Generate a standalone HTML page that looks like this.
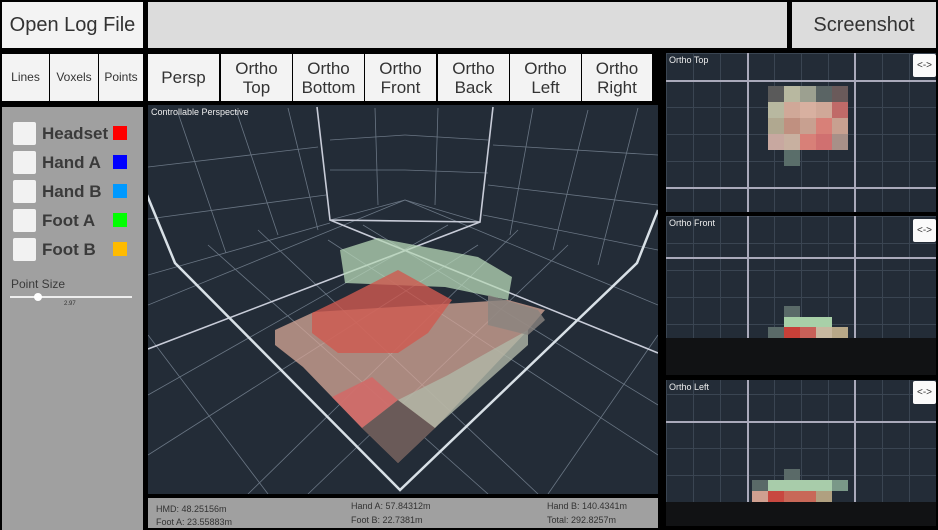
<!DOCTYPE html>
<html><head><meta charset="utf-8"><style>
*{margin:0;padding:0;box-sizing:border-box}
body{width:938px;height:530px;background:#000;position:relative;overflow:hidden;font-family:"Liberation Sans",sans-serif}
.a{position:absolute}
.btn{position:absolute;background:#f3f3f3;color:#333;display:flex;align-items:center;justify-content:center;text-align:center;line-height:19px;font-size:17px}
.cb{position:absolute;left:11px;width:23px;height:23px;background:#f2f2f2;border-radius:2px}
.lb{position:absolute;left:42px;font-size:17px;font-weight:bold;color:#3a3a3a}
.sw{position:absolute;left:111px;width:14px;height:14px}
.sm{position:absolute;font-size:9px;color:#333}
.vb{position:absolute;right:0;width:23px;height:23px;background:#fafafa;font-size:10px;color:#333;display:flex;align-items:center;justify-content:center;border-radius:2px}
.pt{position:absolute;left:3px;top:2px;font-size:9px;color:#eee}
</style></head><body>
<div class="btn" style="left:2px;top:2px;width:141px;height:46px;font-size:20px">Open Log File</div>
<div class="a" style="left:148px;top:2px;width:639px;height:46px;background:#dcdcdc"></div>
<div class="btn" style="left:792px;top:2px;width:144px;height:46px;background:#dcdcdc;font-size:20px">Screenshot</div>

<div class="btn" style="left:2px;top:54px;width:47px;height:47px;font-size:12px">Lines</div>
<div class="btn" style="left:50px;top:54px;width:48px;height:47px;font-size:12px">Voxels</div>
<div class="btn" style="left:99px;top:54px;width:44px;height:47px;font-size:12px">Points</div>

<div class="btn" style="left:148px;top:54px;width:71px;height:47px">Persp</div>
<div class="btn" style="left:221px;top:54px;width:71px;height:47px">Ortho<br>Top</div>
<div class="btn" style="left:293px;top:54px;width:71px;height:47px">Ortho<br>Bottom</div>
<div class="btn" style="left:365px;top:54px;width:71px;height:47px">Ortho<br>Front</div>
<div class="btn" style="left:438px;top:54px;width:71px;height:47px">Ortho<br>Back</div>
<div class="btn" style="left:510px;top:54px;width:71px;height:47px">Ortho<br>Left</div>
<div class="btn" style="left:582px;top:54px;width:70px;height:47px">Ortho<br>Right</div>

<div class="a" style="left:2px;top:107px;width:141px;height:423px;background:#a0a0a0">
<div class="cb" style="top:15px"></div><div class="lb" style="left:40px;top:17px">Headset</div><div class="sw" style="top:19px;background:#f00"></div>
<div class="cb" style="top:44px"></div><div class="lb" style="left:40px;top:46px">Hand A</div><div class="sw" style="top:48px;background:#00f"></div>
<div class="cb" style="top:73px"></div><div class="lb" style="left:40px;top:75px">Hand B</div><div class="sw" style="top:77px;background:#09f"></div>
<div class="cb" style="top:102px"></div><div class="lb" style="left:40px;top:104px">Foot A</div><div class="sw" style="top:106px;background:#0f0"></div>
<div class="cb" style="top:131px"></div><div class="lb" style="left:40px;top:133px">Foot B</div><div class="sw" style="top:135px;background:#fb0"></div>
<div class="a" style="left:9px;top:170px;font-size:12px;color:#3a3a3a">Point Size</div>
<div class="a" style="left:8px;top:189px;width:122px;height:2px;background:#eee"></div>
<div class="a" style="left:32px;top:186px;width:8px;height:8px;border-radius:50%;background:#fff"></div>
<div class="a" style="left:62px;top:194px;font-size:6px;color:#333">2.97</div>
</div>

<div class="a" style="left:148px;top:105px;width:510px;height:389px;background:#232c37;overflow:hidden">
<svg width="510" height="389" style="position:absolute;left:0;top:0">
<g stroke="#6a7684" stroke-width="0.8" fill="none">
<line x1="30" y1="8" x2="78" y2="148"/><line x1="88" y1="5" x2="130" y2="130"/><line x1="140" y1="3" x2="170" y2="125"/>
<line x1="0" y1="62" x2="170" y2="42"/><line x1="0" y1="114" x2="178" y2="90"/><line x1="0" y1="170" x2="182" y2="118"/>
<line x1="227" y1="3" x2="230" y2="100"/><line x1="290" y1="3" x2="287" y2="100"/>
<line x1="182" y1="35" x2="257" y2="30"/><line x1="257" y1="30" x2="340" y2="35"/><line x1="182" y1="65" x2="257" y2="65"/><line x1="257" y1="65" x2="340" y2="68"/>
<line x1="345" y1="40" x2="510" y2="50"/><line x1="340" y1="80" x2="510" y2="100"/><line x1="335" y1="110" x2="510" y2="145"/>
<line x1="385" y1="3" x2="362" y2="130"/><line x1="440" y1="5" x2="405" y2="145"/><line x1="490" y1="3" x2="450" y2="160"/>
<line x1="0" y1="200" x2="257" y2="95"/><line x1="0" y1="290" x2="300" y2="120"/><line x1="0" y1="350" x2="330" y2="140"/>
<line x1="510" y1="200" x2="257" y2="95"/><line x1="510" y1="300" x2="215" y2="120"/><line x1="510" y1="350" x2="180" y2="135"/>
<line x1="60" y1="140" x2="340" y2="389"/><line x1="110" y1="125" x2="390" y2="389"/><line x1="0" y1="230" x2="120" y2="389"/>
<line x1="420" y1="140" x2="160" y2="389"/><line x1="370" y1="125" x2="100" y2="389"/><line x1="510" y1="230" x2="400" y2="389"/>
<line x1="182" y1="115" x2="257" y2="95"/><line x1="257" y1="95" x2="332" y2="117"/>
</g>
<g stroke="#c8ccd8" stroke-width="1.6" fill="none">
<polyline points="169,2 182,115 332,117 345,2"/>
<polyline points="0,244 332,117"/><polyline points="510,248 182,115"/>
</g>
<polyline points="-1,90 27,158 252,385 489,158 510,105" stroke="#d8e0e6" stroke-width="2.5" fill="none"/>
<g>
<polygon points="127,225 166,207 360,195 397,205 380,225 290,320 250,358 214,323 184,292 155,262 127,240" fill="#d8a898" opacity="0.75"/>
<polygon points="192,145 230,133 330,152 364,172 360,195 297,182 197,178" fill="#b8d8b8" opacity="0.75"/>
<polygon points="164,208 197,192 250,165 304,195 280,228 250,248 190,248 164,228" fill="#d05a50" opacity="0.8"/>
<polygon points="184,292 224,272 250,295 214,323" fill="#d06a68" opacity="0.9"/>
<polygon points="214,323 250,295 287,323 250,358" fill="#6a5a58"/>
<polygon points="287,323 250,295 300,270 335,250 380,225 380,240 290,320" fill="#b0b8a8" opacity="0.8"/>
<polygon points="340,190 390,205 397,215 380,230 340,220" fill="#8a8480" opacity="0.8"/>
</g>
</svg>
<div class="pt" style="font-size:9px">Controllable Perspective</div>
</div>

<div class="a" style="left:148px;top:498px;width:510px;height:30px;background:#a0a0a0">
<div class="sm" style="left:8px;top:6px">HMD: 48.25156m</div><div class="sm" style="left:8px;top:19px">Foot A: 23.55883m</div>
<div class="sm" style="left:203px;top:3px">Hand A: 57.84312m</div><div class="sm" style="left:203px;top:17px">Foot B: 22.7381m</div>
<div class="sm" style="left:399px;top:3px">Hand B: 140.4341m</div><div class="sm" style="left:399px;top:17px">Total: 292.8257m</div>
</div>

<div class="a" style="left:666px;top:53px;width:270px;height:159px;background:#232c37;overflow:hidden;
background-image:linear-gradient(90deg,#3a4552 1px,transparent 1px),linear-gradient(#3a4552 1px,transparent 1px);background-size:27px 27px;background-position:0 0">
<div class="a" style="left:81px;top:0;width:1.5px;height:159px;background:#aab"></div>
<div class="a" style="left:188px;top:0;width:1.5px;height:159px;background:#aab"></div>
<div class="a" style="left:0;top:27px;width:270px;height:1.5px;background:#aab"></div>
<div class="a" style="left:0;top:134px;width:270px;height:1.5px;background:#aab"></div>
<svg class="a" style="left:102px;top:33px" width="82" height="65">
<rect x="0" y="0" width="16" height="16" fill="#5a5a5a"/><rect x="16" y="0" width="16" height="16" fill="#b8b8a0"/><rect x="32" y="0" width="16" height="16" fill="#9ca090"/><rect x="48" y="0" width="16" height="16" fill="#5a6464"/><rect x="64" y="0" width="16" height="16" fill="#6a5a5a"/>
<rect x="0" y="16" width="16" height="16" fill="#b8b8a0"/><rect x="16" y="16" width="16" height="16" fill="#d0a898"/><rect x="32" y="16" width="16" height="16" fill="#d8b0a0"/><rect x="48" y="16" width="16" height="16" fill="#d0a898"/><rect x="64" y="16" width="16" height="16" fill="#c06a68"/>
<rect x="0" y="32" width="16" height="16" fill="#b0a890"/><rect x="16" y="32" width="16" height="16" fill="#c09080"/><rect x="32" y="32" width="16" height="16" fill="#c8a090"/><rect x="48" y="32" width="16" height="16" fill="#d88078"/><rect x="64" y="32" width="16" height="16" fill="#c8a090"/>
<rect x="0" y="48" width="16" height="16" fill="#c8a8a0"/><rect x="16" y="48" width="16" height="16" fill="#c8b0a0"/><rect x="32" y="48" width="16" height="16" fill="#d88078"/><rect x="48" y="48" width="16" height="16" fill="#d07070"/><rect x="64" y="48" width="16" height="16" fill="#a89088"/>
</svg>
<div class="a" style="left:118px;top:97px;width:16px;height:16px;background:#5a6e6a"></div>
<div class="pt">Ortho Top</div><div class="vb" style="top:1px">&lt;-&gt;</div>
</div>

<div class="a" style="left:666px;top:216px;width:270px;height:159px;background:#232c37;overflow:hidden;
background-image:linear-gradient(90deg,#3a4552 1px,transparent 1px),linear-gradient(#3a4552 1px,transparent 1px);background-size:27px 27px">
<div class="a" style="left:81px;top:0;width:1.5px;height:159px;background:#aab"></div>
<div class="a" style="left:188px;top:0;width:1.5px;height:159px;background:#aab"></div>
<div class="a" style="left:0;top:41px;width:270px;height:1.5px;background:#aab"></div>
<div class="a" style="left:118px;top:90px;width:16px;height:11px;background:#5a6a68"></div>
<div class="a" style="left:118px;top:101px;width:48px;height:10px;background:#a8d0a8"></div>
<div class="a" style="left:102px;top:111px;width:16px;height:11px;background:#5a6a68"></div>
<div class="a" style="left:118px;top:111px;width:16px;height:11px;background:#c84038"></div>
<div class="a" style="left:134px;top:111px;width:16px;height:11px;background:#c86058"></div>
<div class="a" style="left:150px;top:111px;width:16px;height:11px;background:#c8b8a0"></div>
<div class="a" style="left:166px;top:111px;width:16px;height:11px;background:#b8a888"></div>
<div class="a" style="left:0;top:122px;width:270px;height:37px;background:#111214"></div>
<div class="pt">Ortho Front</div><div class="vb" style="top:3px">&lt;-&gt;</div>
</div>

<div class="a" style="left:666px;top:380px;width:270px;height:146px;background:#232c37;overflow:hidden;
background-image:linear-gradient(90deg,#3a4552 1px,transparent 1px),linear-gradient(#3a4552 1px,transparent 1px);background-size:27px 27px;background-position:0 14px">
<div class="a" style="left:81px;top:0;width:1.5px;height:146px;background:#aab"></div>
<div class="a" style="left:188px;top:0;width:1.5px;height:146px;background:#aab"></div>
<div class="a" style="left:0;top:41px;width:270px;height:1.5px;background:#aab"></div>
<div class="a" style="left:118px;top:89px;width:16px;height:11px;background:#5a6a68"></div>
<div class="a" style="left:86px;top:100px;width:16px;height:11px;background:#5a6a68"></div>
<div class="a" style="left:102px;top:100px;width:64px;height:11px;background:#a8ccaa"></div>
<div class="a" style="left:166px;top:100px;width:16px;height:11px;background:#7a9888"></div>
<div class="a" style="left:86px;top:111px;width:16px;height:11px;background:#d0a090"></div>
<div class="a" style="left:102px;top:111px;width:16px;height:11px;background:#c84840"></div>
<div class="a" style="left:118px;top:111px;width:32px;height:11px;background:#c86858"></div>
<div class="a" style="left:150px;top:111px;width:16px;height:11px;background:#b0a080"></div>
<div class="a" style="left:0;top:122px;width:270px;height:24px;background:#111214"></div>
<div class="pt">Ortho Left</div><div class="vb" style="top:1px">&lt;-&gt;</div>
</div>
</body></html>
